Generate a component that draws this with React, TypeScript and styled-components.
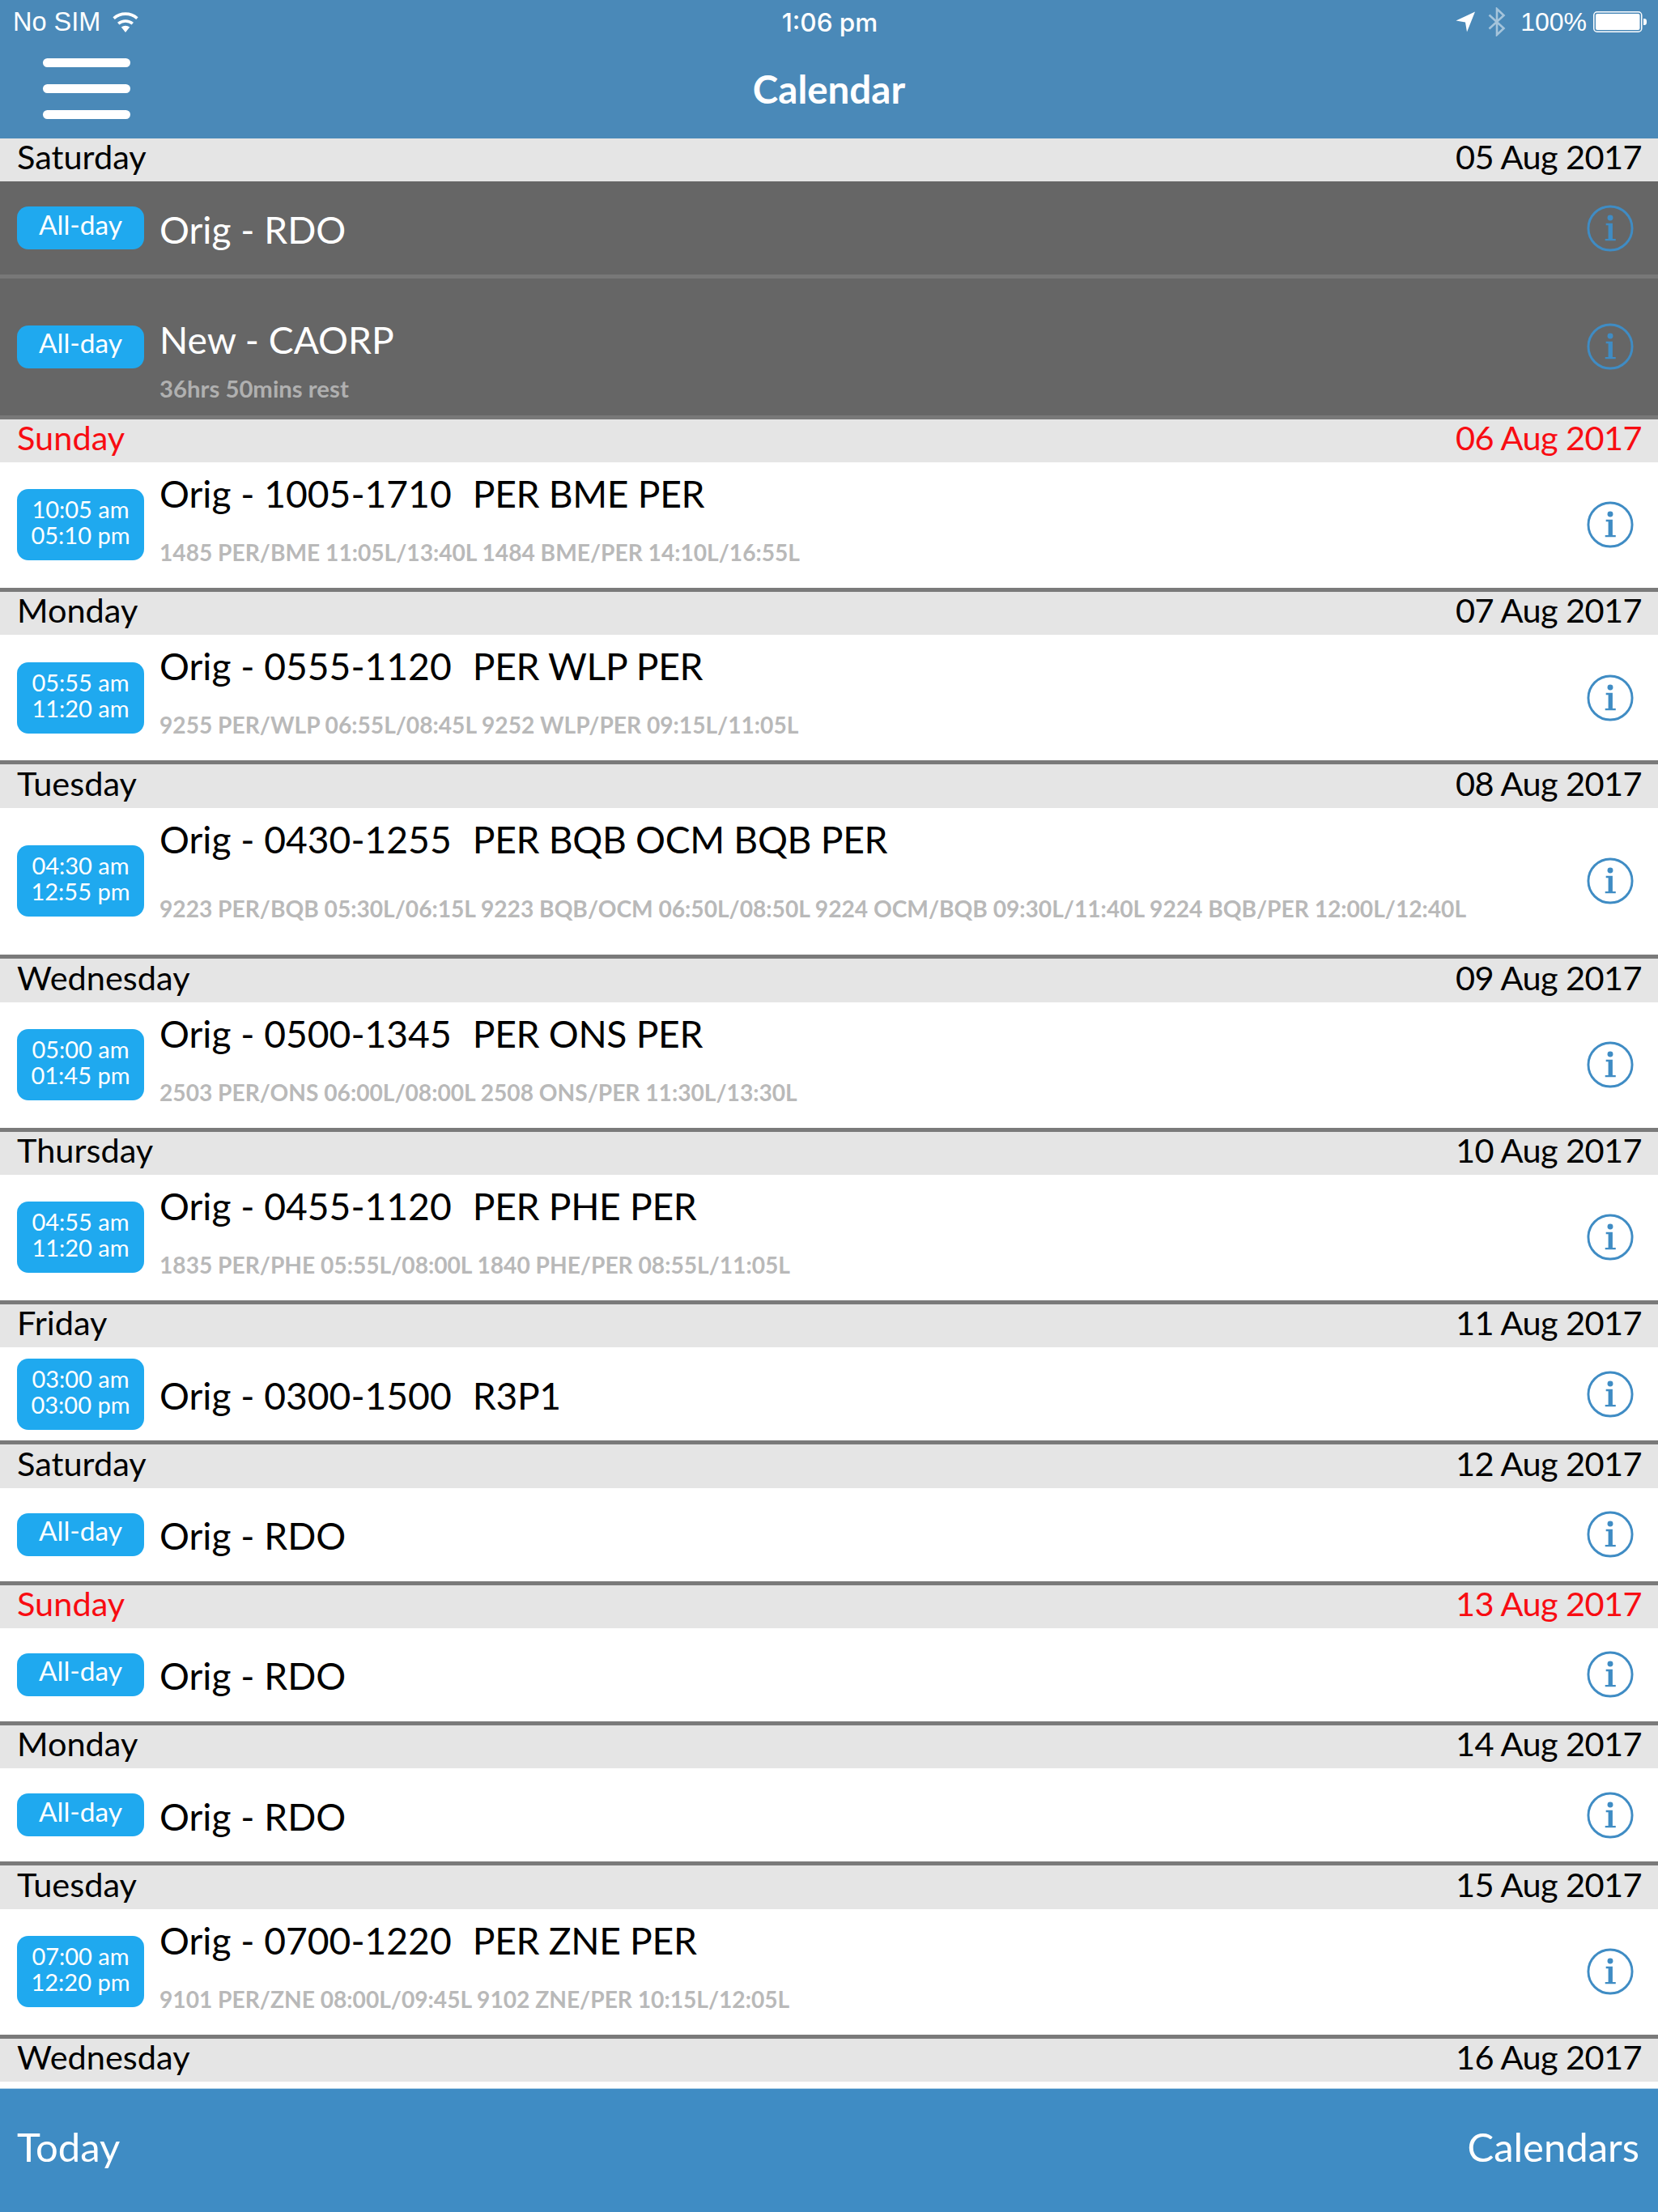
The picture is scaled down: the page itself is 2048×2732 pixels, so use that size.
import React from "react";
import styled, { createGlobalStyle } from "styled-components";

const Global = createGlobalStyle`
  html, body { margin: 0; padding: 0; background: #fff; }
  * { box-sizing: border-box; }
`;

const Page = styled.div`
  width: 2048px;
  height: 2732px;
  display: flex;
  flex-direction: column;
  overflow: hidden;
  background: #fff;
  font-family: Lato, "Open Sans", sans-serif;
`;

const Header = styled.header`
  flex: none;
  height: 171px;
  background: #4a89b8;
  color: #fff;
  display: flex;
  flex-direction: column;
`;

const StatusBar = styled.div`
  height: 54px;
  padding: 0 14px 0 16px;
  display: grid;
  grid-template-columns: 1fr auto 1fr;
  align-items: center;
  font-family: "Liberation Sans", Arial, sans-serif;
  font-size: 32.5px;
  font-weight: 400;
`;

const StatusGroup = styled.div<{ $end?: boolean }>`
  display: flex;
  align-items: center;
  justify-content: ${(p) => (p.$end ? "flex-end" : "flex-start")};
`;

const Carrier = styled.span`
  margin-right: 14px;
`;

const Clock = styled.span`
  font-family: Inter, "Liberation Sans", sans-serif;
  font-size: 31.5px;
  font-weight: 500;
`;

const Percent = styled.span`
  font-size: 32px;
  margin: 0 8px 0 18px;
`;

const NavBar = styled.div`
  flex: 1;
  display: grid;
  grid-template-columns: 1fr auto 1fr;
  align-items: center;
  padding-bottom: 6px;
`;

const Menu = styled.div`
  margin-left: 53px;
  align-self: start;
  margin-top: 18px;
  display: flex;
  flex-direction: column;
  gap: 21px;
`;

const MenuBar = styled.span`
  display: block;
  width: 108px;
  height: 11px;
  border-radius: 6px;
  background: #fff;
`;

const Title = styled.h1`
  margin: 0;
  font-size: 47.5px;
  font-weight: 700;
  line-height: 1.2;
`;

const List = styled.main`
  flex: 1;
  min-height: 0;
  overflow: hidden;
`;

const DayBand = styled.div<{ $red?: boolean }>`
  height: 53.33px;
  padding: 0 20px 7px 21px;
  display: flex;
  align-items: center;
  justify-content: space-between;
  background: #e5e5e5;
  color: ${(p) => (p.$red ? "#f80c12" : "#000")};
  font-size: 41.5px;
  line-height: 1;
`;

const DayDate = styled.span`
  letter-spacing: -0.6px;
`;

const Row = styled.div<{ $h: number; $dark?: boolean }>`
  height: ${(p) => p.$h}px;
  padding: 0 30px 0 21px;
  display: flex;
  align-items: center;
  background: ${(p) => (p.$dark ? "#666666" : "#ffffff")};
  border-bottom: 5.33px solid ${(p) => (p.$dark ? "#787878" : "#7a7a7a")};
`;

const Badge = styled.div`
  flex: none;
  width: 157px;
  height: 88px;
  padding: 9px 0 0;
  border-radius: 14px;
  background: #1fa9ef;
  color: #fff;
  font-size: 29px;
  line-height: 32px;
  text-align: center;
`;

const AllDay = styled(Badge)`
  height: 53px;
  padding: 1.5px 0 0;
  font-size: 33.5px;
  line-height: 40px;
`;

const Texts = styled.div<{ $top?: number; $gap?: number }>`
  flex: 1;
  min-width: 0;
  margin-left: 19px;
  align-self: ${(p) => (p.$top !== undefined ? "flex-start" : "center")};
  padding-top: ${(p) => p.$top ?? 2}px;
  display: flex;
  flex-direction: column;
  gap: ${(p) => p.$gap ?? 0}px;
`;

const EventTitle = styled.div<{ $dark?: boolean }>`
  color: ${(p) => (p.$dark ? "#fff" : "#000")};
  font-size: 46.2px;
  line-height: 56px;
  white-space: pre;
`;

const Route = styled.span`
  margin-left: 3px;
  letter-spacing: -0.3px;
`;

const EventSub = styled.div<{ $dark?: boolean }>`
  color: ${(p) => (p.$dark ? "#b0b0b0" : "#b9b9b9")};
  font-size: ${(p) => (p.$dark ? 29.3 : 28.15)}px;
  font-weight: 700;
  line-height: 34px;
  white-space: pre;
`;

const Footer = styled.footer`
  flex: none;
  height: 153px;
  padding: 0 23px 10px 21px;
  display: flex;
  align-items: center;
  justify-content: space-between;
  background: #3f8cc4;
  border-top: 1px solid #b5d3e8;
  color: #fff;
  font-size: 49px;
`;

const InfoIcon = () => (
  <svg width="58" height="58" viewBox="0 0 60 60" style={{ flex: "none" }}>
    <circle cx="30" cy="30" r="28" fill="none" stroke="#3f8cc4" strokeWidth="3" />
    <circle cx="30" cy="16.5" r="3.6" fill="#3f8cc4" />
    <path d="M24.5 23.5h8.5v20h4v2.4H23.5v-2.4h4V26h-3z" fill="#3f8cc4" />
  </svg>
);

const Wifi = () => (
  <svg width="34" height="25" viewBox="0 0 34 25">
    <path d="M17 25l-5.2-6.4a8 8 0 0 1 10.4 0z" fill="#fff" />
    <path d="M8.2 14.2a13.6 13.6 0 0 1 17.6 0" fill="none" stroke="#fff" strokeWidth="3.6" />
    <path d="M2.6 7.6a21.6 21.6 0 0 1 28.8 0" fill="none" stroke="#fff" strokeWidth="3.6" />
  </svg>
);

const LocationArrow = () => (
  <svg width="25" height="26" viewBox="0 0 25 26" style={{ marginRight: 15 }}>
    <path d="M24 0.5L14 25.5 12 13.5 0.5 11.5z" fill="#fff" />
  </svg>
);

const Bluetooth = () => (
  <svg width="22" height="36" viewBox="0 0 22 36" opacity="0.5">
    <path d="M1.5 9.5L19.5 26 11 34V2l8.5 8L1.5 26.5" fill="none" stroke="#fff" strokeWidth="2.6" />
  </svg>
);

const Battery = () => (
  <svg width="66" height="26" viewBox="0 0 66 26">
    <rect x="0.75" y="0.75" width="59" height="24.5" rx="4" fill="none" stroke="#fff" strokeWidth="1.5" />
    <rect x="3" y="3" width="54.5" height="20" rx="2" fill="#fff" />
    <path d="M62 9h1a3 3 0 0 1 3 3v2a3 3 0 0 1-3 3h-1z" fill="#fff" />
  </svg>
);

type Ev = {
  h: number;
  title: string;
  route?: string;
  sub?: string;
  start?: string;
  end?: string;
  dark?: boolean;
  top?: number;
  gap?: number;
};
type Day = { name: string; date: string; red?: boolean; events: Ev[] };

const T = 160;
const S = 120;

const days: Day[] = [
  {
    name: "Saturday",
    date: "05 Aug 2017",
    events: [
      { h: S, title: "Orig - RDO", dark: true },
      { h: 173.33, title: "New - CAORP", sub: "36hrs 50mins rest", dark: true, top: 47, gap: 16 },
    ],
  },
  {
    name: "Sunday",
    date: "06 Aug 2017",
    red: true,
    events: [
      { h: T, title: "Orig - 1005-1710", route: "PER BME PER", sub: "1485 PER/BME 11:05L/13:40L 1484 BME/PER 14:10L/16:55L", start: "10:05 am", end: "05:10 pm", top: 10, gap: 28 },
    ],
  },
  {
    name: "Monday",
    date: "07 Aug 2017",
    events: [
      { h: T, title: "Orig - 0555-1120", route: "PER WLP PER", sub: "9255 PER/WLP 06:55L/08:45L 9252 WLP/PER 09:15L/11:05L", start: "05:55 am", end: "11:20 am", top: 10, gap: 28 },
    ],
  },
  {
    name: "Tuesday",
    date: "08 Aug 2017",
    events: [
      { h: 186.67, title: "Orig - 0430-1255", route: "PER BQB OCM BQB PER", sub: "9223 PER/BQB 05:30L/06:15L 9223 BQB/OCM 06:50L/08:50L 9224 OCM/BQB 09:30L/11:40L 9224 BQB/PER 12:00L/12:40L", start: "04:30 am", end: "12:55 pm", top: 10, gap: 41 },
    ],
  },
  {
    name: "Wednesday",
    date: "09 Aug 2017",
    events: [
      { h: T, title: "Orig - 0500-1345", route: "PER ONS PER", sub: "2503 PER/ONS 06:00L/08:00L 2508 ONS/PER 11:30L/13:30L", start: "05:00 am", end: "01:45 pm", top: 10, gap: 28 },
    ],
  },
  {
    name: "Thursday",
    date: "10 Aug 2017",
    events: [
      { h: T, title: "Orig - 0455-1120", route: "PER PHE PER", sub: "1835 PER/PHE 05:55L/08:00L 1840 PHE/PER 08:55L/11:05L", start: "04:55 am", end: "11:20 am", top: 10, gap: 28 },
    ],
  },
  {
    name: "Friday",
    date: "11 Aug 2017",
    events: [{ h: S, title: "Orig - 0300-1500", route: "R3P1", start: "03:00 am", end: "03:00 pm" }],
  },
  { name: "Saturday", date: "12 Aug 2017", events: [{ h: S, title: "Orig - RDO" }] },
  { name: "Sunday", date: "13 Aug 2017", red: true, events: [{ h: S, title: "Orig - RDO" }] },
  { name: "Monday", date: "14 Aug 2017", events: [{ h: S, title: "Orig - RDO" }] },
  {
    name: "Tuesday",
    date: "15 Aug 2017",
    events: [
      { h: T, title: "Orig - 0700-1220", route: "PER ZNE PER", sub: "9101 PER/ZNE 08:00L/09:45L 9102 ZNE/PER 10:15L/12:05L", start: "07:00 am", end: "12:20 pm", top: 10, gap: 28 },
    ],
  },
  { name: "Wednesday", date: "16 Aug 2017", events: [] },
];

export default function App() {
  return (
    <Page>
      <Global />
      <Header>
        <StatusBar>
          <StatusGroup>
            <Carrier>No SIM</Carrier>
            <Wifi />
          </StatusGroup>
          <Clock>1:06 pm</Clock>
          <StatusGroup $end>
            <LocationArrow />
            <Bluetooth />
            <Percent>100%</Percent>
            <Battery />
          </StatusGroup>
        </StatusBar>
        <NavBar>
          <Menu>
            <MenuBar />
            <MenuBar />
            <MenuBar />
          </Menu>
          <Title>Calendar</Title>
        </NavBar>
      </Header>
      <List>
        {days.map((d) => (
          <section key={d.date}>
            <DayBand $red={d.red}>
              <span>{d.name}</span>
              <DayDate>{d.date}</DayDate>
            </DayBand>
            {d.events.map((e) => (
              <Row key={e.title} $h={e.h} $dark={e.dark}>
                {e.start ? (
                  <Badge>
                    {e.start}
                    <br />
                    {e.end}
                  </Badge>
                ) : (
                  <AllDay>All-day</AllDay>
                )}
                <Texts $top={e.top} $gap={e.gap}>
                  <EventTitle $dark={e.dark}>
                    {e.title}
                    {e.route && <Route>{"  " + e.route}</Route>}
                  </EventTitle>
                  {e.sub && <EventSub $dark={e.dark}>{e.sub}</EventSub>}
                </Texts>
                <InfoIcon />
              </Row>
            ))}
          </section>
        ))}
      </List>
      <Footer>
        <span>Today</span>
        <span>Calendars</span>
      </Footer>
    </Page>
  );
}
